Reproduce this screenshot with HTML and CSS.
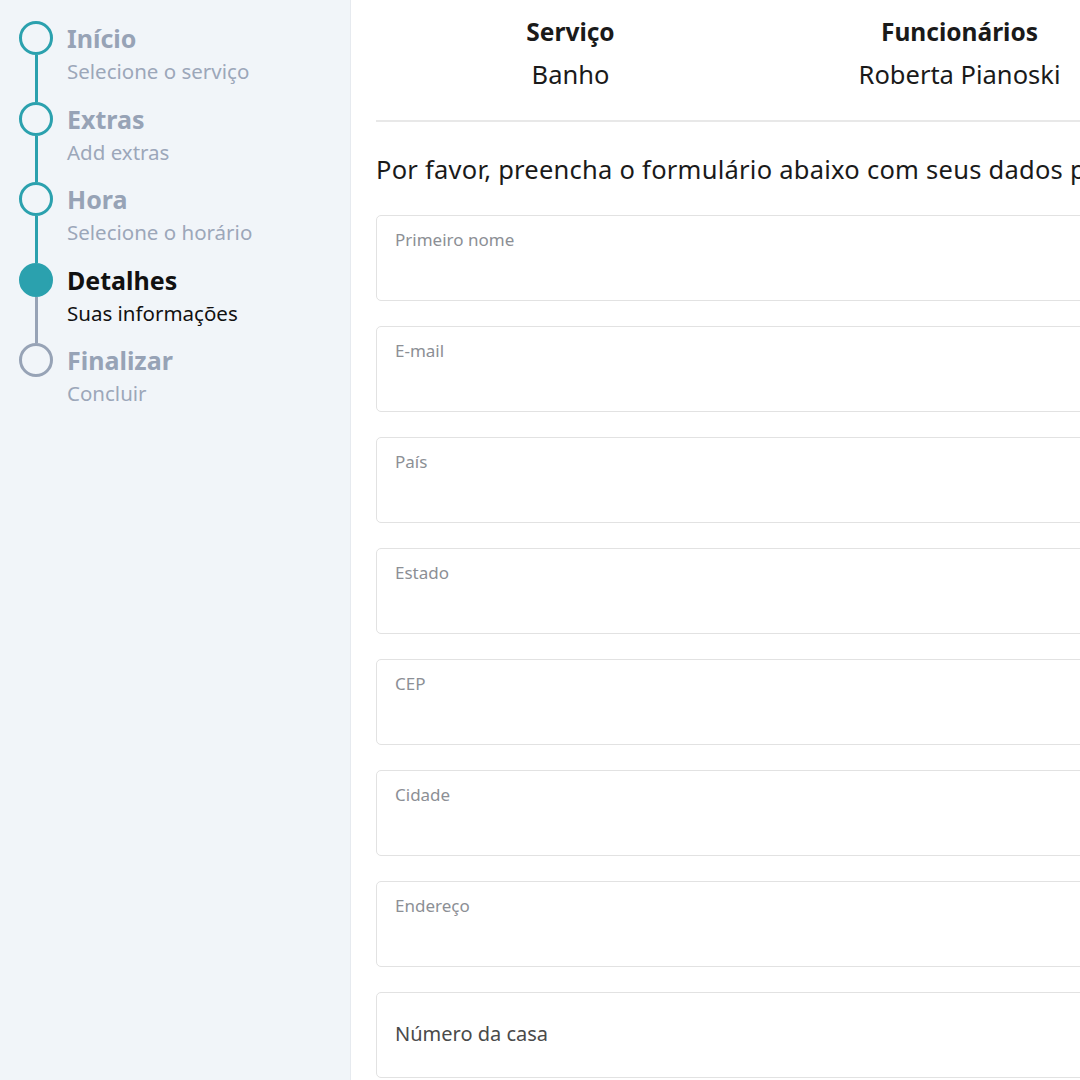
FILE: index.html
```html
<!DOCTYPE html>
<html lang="pt-BR">
<head>
  <meta charset="UTF-8">
  <meta name="viewport" content="width=device-width, initial-scale=1.0">
  <title>Agendamento</title>
  <link rel="stylesheet" href="styles.css">
</head>
<body>

  <div class="page">
    <aside class="sidebar">
      <div class="step done">
        <div class="marker"><span class="circle"></span><span class="line"></span></div>
        <div class="step-text">
          <div class="step-title">Início</div>
          <div class="step-sub">Selecione o serviço</div>
        </div>
      </div>
      <div class="step done">
        <div class="marker"><span class="circle"></span><span class="line"></span></div>
        <div class="step-text">
          <div class="step-title">Extras</div>
          <div class="step-sub">Add extras</div>
        </div>
      </div>
      <div class="step done">
        <div class="marker"><span class="circle"></span><span class="line"></span></div>
        <div class="step-text">
          <div class="step-title">Hora</div>
          <div class="step-sub">Selecione o horário</div>
        </div>
      </div>
      <div class="step active">
        <div class="marker"><span class="circle"></span><span class="line"></span></div>
        <div class="step-text">
          <div class="step-title">Detalhes</div>
          <div class="step-sub">Suas informações</div>
        </div>
      </div>
      <div class="step">
        <div class="marker"><span class="circle"></span></div>
        <div class="step-text">
          <div class="step-title">Finalizar</div>
          <div class="step-sub">Concluir</div>
        </div>
      </div>
    </aside>

    <main class="main">
      <div class="summary">
        <div class="summary-col">
          <div class="summary-label">Serviço</div>
          <div class="summary-value">Banho</div>
        </div>
        <div class="summary-col">
          <div class="summary-label">Funcionários</div>
          <div class="summary-value">Roberta Pianoski</div>
        </div>
        <div class="summary-col"></div>
      </div>

      <p class="intro">Por favor, preencha o formulário abaixo com seus dados p</p>

      <form class="form">
        <div class="field"><label>Primeiro nome</label><input type="text"></div>
        <div class="field"><label>E-mail</label><input type="email"></div>
        <div class="field"><label>País</label><input type="text"></div>
        <div class="field"><label>Estado</label><input type="text"></div>
        <div class="field"><label>CEP</label><input type="text"></div>
        <div class="field"><label>Cidade</label><input type="text"></div>
        <div class="field"><label>Endereço</label><input type="text"></div>
        <div class="field empty"><label>Número da casa</label><input type="text"></div>
      </form>
    </main>
  </div>

</body>
</html>
```

FILE: styles.css
```css
body {
  margin: 0;
  font-family: 'Noto Sans', 'Open Sans', sans-serif;
  color: #1a1a1a;
  background: #fff;
  overflow: hidden;
}

.page {
  display: flex;
  width: 1600px;
  height: 100vh;
}

.sidebar {
  width: 351px;
  flex-shrink: 0;
  background-color: #f1f5f9;
  border-right: 1px solid #e6eaef;
  padding: 21px 0 0 19px;
  box-sizing: border-box;
}

.step {
  display: flex;
  gap: 14px;
  height: 80.5px;
}

.marker {
  width: 34px;
  display: flex;
  flex-direction: column;
  align-items: center;
}

.circle {
  width: 34px;
  height: 34px;
  box-sizing: border-box;
  border: 3px solid #2ba1ae;
  border-radius: 50%;
  flex-shrink: 0;
}

.line {
  flex: 1;
  width: 3px;
  background-color: #2ba1ae;
}

.step.active .circle {
  background-color: #2ba1ae;
}

.step.active .line {
  background-color: #97a3b6;
}

.step:not(.done):not(.active) .circle {
  border-color: #97a3b6;
}

.step-title {
  font-size: 25px;
  font-weight: 700;
  line-height: 34px;
  color: #97a3b6;
}

.step-sub {
  font-size: 20.5px;
  line-height: 32px;
  color: #9ca7b9;
}

.step.active .step-title,
.step.active .step-sub {
  color: #111;
}

.main {
  width: 1200px;
  padding: 0 0 0 25px;
}

.summary {
  display: grid;
  grid-template-columns: repeat(3, 389px);
  border-bottom: 2px solid #e8e8e8;
  padding: 13px 0 23px;
  text-align: center;
}

.summary-label {
  font-size: 24.5px;
  font-weight: 700;
  line-height: 38px;
}

.summary-value {
  font-size: 25.5px;
  line-height: 46px;
}

.intro {
  font-size: 25.5px;
  letter-spacing: 0.25px;
  line-height: 34px;
  margin: 30px 0 29px;
  white-space: nowrap;
}

.form {
  display: flex;
  flex-direction: column;
  gap: 25px;
}

.field {
  position: relative;
  height: 86px;
  border: 1px solid #e2e2e2;
  border-radius: 5px;
  box-sizing: border-box;
  background: #fff;
}

.field label {
  position: absolute;
  top: 12px;
  left: 18px;
  font-size: 17px;
  color: #8c8f95;
}

.field.empty label {
  top: 27px;
  font-size: 20px;
  color: #4a4a4a;
}

.field input {
  border: none;
  outline: none;
  background: transparent;
  width: 100%;
  height: 100%;
  box-sizing: border-box;
  padding: 40px 18px 10px;
  font: inherit;
}
```
